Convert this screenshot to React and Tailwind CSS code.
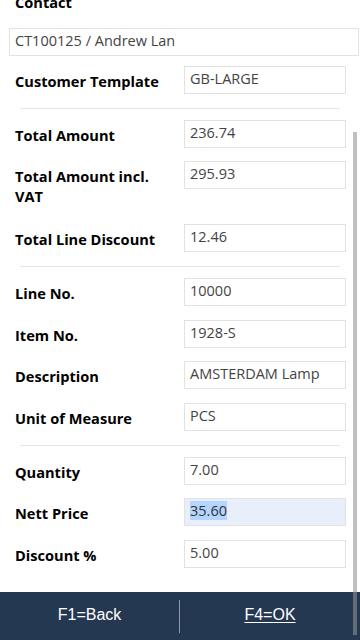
import React from "react";

function Field({ label, value, selected, twoLine, last }) {
  return (
    <div className={`flex ${twoLine ? "mb-[11px]" : last ? "" : "mb-[9.67px]"}`}>
      <div className="w-[184px] shrink-0 pl-[15px] pr-[8px] pt-[5px] pb-[7px] text-[14.6px] leading-[20px] font-bold text-black">
        {label}
      </div>
      <div
        className={`w-[162px] h-[28px] shrink-0 border border-[#e2e2e2] pl-[5px] pt-[2px] text-[14.5px] leading-[20px] text-[#444] whitespace-nowrap overflow-hidden ${
          selected ? "bg-[#e8effb]" : "bg-white"
        }`}
      >
        {selected ? <span className="bg-[#b4d5fe] text-[#333]">{value}</span> : value}
      </div>
    </div>
  );
}

function Sep() {
  return <div className="ml-[20px] w-[320px] h-px bg-[#e6e6e6] mb-[11px]" />;
}

export default function App() {
  return (
    <div
      className="relative w-[360px] h-[640px] overflow-hidden bg-white flex flex-col"
      style={{ fontFamily: "'Open Sans', 'Noto Sans', sans-serif" }}
    >
      <div className="flex-1 overflow-hidden">
        <div className="mt-[-8px] pl-[15px] text-[14.6px] leading-[20px] font-bold text-black">Contact</div>
        <div className="mt-[16px] ml-[9px] w-[350px] h-[28px] border border-[#e2e2e2] pl-[5px] pt-[2px] text-[14.5px] leading-[20px] text-[#444]">
          CT100125 / Andrew Lan
        </div>
        <div className="mt-[10px]">
          <Field label="Customer Template" value="GB-LARGE" />
          <Sep />
          <Field label="Total Amount" value="236.74" />
          <Field label={<>Total Amount incl.<br />VAT</>} value="295.93" twoLine />
          <Field label="Total Line Discount" value="12.46" />
          <Sep />
          <Field label="Line No." value="10000" />
          <Field label="Item No." value="1928-S" />
          <Field label="Description" value="AMSTERDAM Lamp" />
          <Field label="Unit of Measure" value="PCS" />
          <Sep />
          <Field label="Quantity" value="7.00" />
          <Field label="Nett Price" value="35.60" selected />
          <Field label="Discount %" value="5.00" last />
        </div>
      </div>
      <div
        className="h-[48px] shrink-0 bg-[#253851] flex items-center text-white text-[16px]"
        style={{ fontFamily: "'Liberation Sans', Arial, sans-serif" }}
      >
        <div className="w-[179px] text-center pb-[2px]">F1=Back</div>
        <div className="w-px h-[33px] bg-[#8c9bb0]" />
        <div className="flex-1 text-center pb-[2px]">
          <span className="underline underline-offset-[2px]">F4=OK</span>
        </div>
      </div>
      <div className="absolute left-[353px] top-[132px] w-[3.5px] h-[503px] bg-[rgba(147,147,147,0.58)]" />
    </div>
  );
}
